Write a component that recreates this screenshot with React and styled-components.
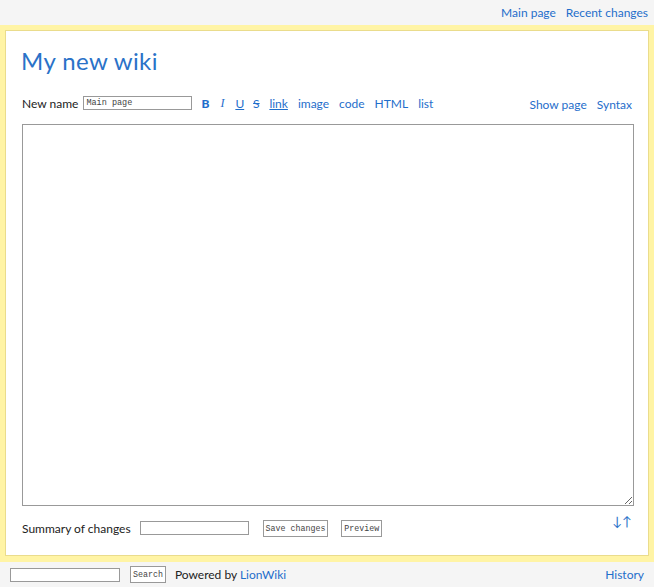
import React from "react";
import styled, { createGlobalStyle } from "styled-components";

const GlobalStyle = createGlobalStyle`
    html, body {
        margin: 0;
        padding: 0;
        background: #f5f5f5;
        font-family: Lato, "Noto Sans", sans-serif;
        font-size: 12px;
        color: #222;
    }
`

const SPage = styled.div`
    display: flex;
    flex-direction: column;
    width: 654px;
    height: 587px;
    & > * {
        flex-shrink: 0;
    }
`

const STopBar = styled.div`
    display: flex;
    justify-content: flex-end;
    align-items: center;
    gap: 10px;
    height: 25px;
    padding-right: 6px;
    padding-bottom: 1px;
    box-sizing: border-box;
`

const SLink = styled.a`
    color: #1f6ecb;
    text-decoration: ${p => p.$underline ? "underline" : "none"};
    cursor: pointer;
`

const SFrame = styled.div`
    background: #fff4a5;
    padding: 5px 5px 6px 5px;
`

const SPanel = styled.div`
    background: #fff;
    border: 1px solid #eadc8c;
    padding: 15px 15px 16px 16px;
    height: 526px;
    box-sizing: border-box;
    display: flex;
    flex-direction: column;
`

const STitle = styled.h1`
    margin: 0 0 0 -1px;
    font-weight: normal;
    font-size: 24px;
    letter-spacing: 0.4px;
    color: #2a72c8;
    line-height: 30px;
`

const SToolbar = styled.div`
    display: flex;
    align-items: center;
    margin-top: 17px;
    height: 20px;
`

const SLabel = styled.span`
    margin-right: ${p => p.$gap || 5}px;
`

const SField = styled.input`
    width: ${p => p.$width}px;
    height: 14px;
    box-sizing: border-box;
    border: 1px solid #999;
    padding: 0 2px;
    font-family: "Liberation Mono", monospace;
    font-size: 8.5px;
    color: #444;
    margin-right: ${p => p.$gap || 0}px;
`

const SGroup = styled.span`
    display: flex;
    align-items: center;
    gap: ${p => p.$gap}px;
    margin-right: ${p => p.$after || 0}px;
`

const SFmtButton = styled.a`
    color: #1f6ecb;
    font-size: 12px;
    width: 8px;
    text-align: center;
    cursor: pointer;
    font-weight: ${p => p.$bold ? 900 : "normal"};
    font-style: ${p => p.$italic ? "italic" : "normal"};
    font-family: ${p => p.$italic ? "'Liberation Serif', serif" : "inherit"};
    text-decoration: ${p => p.$line || "none"};
`

const SSpacer = styled.div`
    flex: 1;
`

const SRight = styled.span`
    display: flex;
    gap: 10px;
    padding-top: 2px;
    padding-right: 1px;
`

const SEditor = styled.textarea`
    display: block;
    margin-top: 11px;
    width: 612px;
    height: 382px;
    box-sizing: border-box;
    border: 1px solid #999;
    resize: vertical;
    font-family: "Liberation Mono", monospace;
    font-size: 12px;
`

const SSaveRow = styled.div`
    display: flex;
    align-items: center;
    margin-top: 13px;
    height: 18px;
`

const SButton = styled.button`
    height: 17px;
    padding: 0 2px;
    border: 1px solid #999;
    background: #fff;
    font-family: "Liberation Mono", monospace;
    font-size: 8.3px;
    color: #444;
    margin-right: ${p => p.$gap || 0}px;
    cursor: pointer;
`

const SArrows = styled.a`
    margin-left: auto;
    margin-top: -14px;
    margin-right: 1px;
    color: #2a72c8;
    font-size: 13px;
    cursor: pointer;
`

const SFooter = styled.div`
    display: flex;
    align-items: center;
    height: 25px;
    padding: 0 10px;
    box-sizing: border-box;
`

export default function App() {
    return (
        <SPage>
            <GlobalStyle />
            <STopBar>
                <SLink>Main page</SLink>
                <SLink>Recent changes</SLink>
            </STopBar>
            <SFrame>
                <SPanel>
                    <STitle>My new wiki</STitle>
                    <SToolbar>
                        <SLabel>New name</SLabel>
                        <SField $width={109} $gap={9} defaultValue="Main page" />
                        <SGroup $gap={9} $after={9}>
                            <SFmtButton $bold>B</SFmtButton>
                            <SFmtButton $italic>I</SFmtButton>
                            <SFmtButton $line="underline">U</SFmtButton>
                            <SFmtButton $line="line-through">S</SFmtButton>
                        </SGroup>
                        <SGroup $gap={10}>
                            <SLink $underline>link</SLink>
                            <SLink>image</SLink>
                            <SLink>code</SLink>
                            <SLink>HTML</SLink>
                            <SLink>list</SLink>
                        </SGroup>
                        <SSpacer />
                        <SRight>
                            <SLink>Show page</SLink>
                            <SLink>Syntax</SLink>
                        </SRight>
                    </SToolbar>
                    <SEditor />
                    <SSaveRow>
                        <SLabel $gap={9}>Summary of changes</SLabel>
                        <SField $width={109} $gap={14} />
                        <SButton $gap={13}>Save changes</SButton>
                        <SButton>Preview</SButton>
                        <SArrows>↓↑</SArrows>
                    </SSaveRow>
                </SPanel>
            </SFrame>
            <SFooter>
                <SField $width={110} $gap={10} />
                <SButton $gap={9}>Search</SButton>
                <span>Powered by&nbsp;<SLink>LionWiki</SLink></span>
                <SSpacer />
                <SLink>History</SLink>
            </SFooter>
        </SPage>
    )
}
